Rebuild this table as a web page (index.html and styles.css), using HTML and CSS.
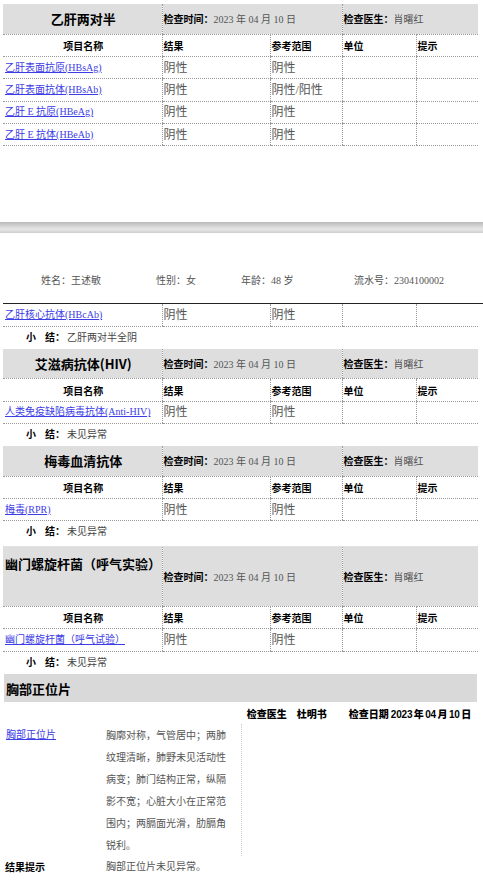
FILE: index.html
```html
<!DOCTYPE html>
<html lang="zh">
<head>
<meta charset="utf-8">
<title>体检报告</title>
<link rel="stylesheet" href="styles.css">
</head>
<body>
<div class="page page-first">
  <table class="rep">
    <colgroup><col class="c1"><col class="c2"><col class="c3"><col class="c4"><col class="c5"></colgroup>
    <tr class="head">
      <td class="title">乙肝两对半</td>
      <td colspan="2"><b class="lbl">检查时间：</b>2023 年 04 月 10 日</td>
      <td colspan="2"><b class="lbl">检查医生：</b>肖曙红</td>
    </tr>
    <tr class="cols">
      <td class="ctr">项目名称</td><td>结果</td><td>参考范围</td><td>单位</td><td>提示</td>
    </tr>
    <tr class="row"><td><a href="#">乙肝表面抗原(HBsAg)</a></td><td class="val">阴性</td><td class="val">阴性</td><td></td><td></td></tr>
    <tr class="row"><td><a href="#">乙肝表面抗体(HBsAb)</a></td><td class="val">阴性</td><td class="val">阴性/阳性</td><td></td><td></td></tr>
    <tr class="row"><td><a href="#">乙肝 E 抗原(HBeAg)</a></td><td class="val">阴性</td><td class="val">阴性</td><td></td><td></td></tr>
    <tr class="row"><td><a href="#">乙肝 E 抗体(HBeAb)</a></td><td class="val">阴性</td><td class="val">阴性</td><td></td><td></td></tr>
  </table>
</div>

<div class="page-break"></div>

<div class="page">
  <div class="patient">
    <span class="pi pi-name">姓名：王述敏</span>
    <span class="pi pi-sex">性别：女</span>
    <span class="pi pi-age">年龄：48 岁</span>
    <span class="pi">流水号：2304100002</span>
  </div>

  <table class="rep">
    <colgroup><col class="c1"><col class="c2"><col class="c3"><col class="c4"><col class="c5"></colgroup>
    <tr class="row"><td><a href="#">乙肝核心抗体(HBcAb)</a></td><td class="val">阴性</td><td class="val">阴性</td><td></td><td></td></tr>
  </table>
  <div class="summary"><b class="sum-xiao">小</b><b class="sum-jie">结：</b>乙肝两对半全阴</div>

  <table class="rep">
    <colgroup><col class="c1"><col class="c2"><col class="c3"><col class="c4"><col class="c5"></colgroup>
    <tr class="head">
      <td class="title">艾滋病抗体(HIV)</td>
      <td colspan="2"><b class="lbl">检查时间：</b>2023 年 04 月 10 日</td>
      <td colspan="2"><b class="lbl">检查医生：</b>肖曙红</td>
    </tr>
    <tr class="cols">
      <td class="ctr">项目名称</td><td>结果</td><td>参考范围</td><td>单位</td><td>提示</td>
    </tr>
    <tr class="row"><td><a href="#">人类免疫缺陷病毒抗体(Anti-HIV)</a></td><td class="val">阴性</td><td class="val">阴性</td><td></td><td></td></tr>
  </table>
  <div class="summary"><b class="sum-xiao">小</b><b class="sum-jie">结：</b>未见异常</div>

  <table class="rep">
    <colgroup><col class="c1"><col class="c2"><col class="c3"><col class="c4"><col class="c5"></colgroup>
    <tr class="head">
      <td class="title">梅毒血清抗体</td>
      <td colspan="2"><b class="lbl">检查时间：</b>2023 年 04 月 10 日</td>
      <td colspan="2"><b class="lbl">检查医生：</b>肖曙红</td>
    </tr>
    <tr class="cols">
      <td class="ctr">项目名称</td><td>结果</td><td>参考范围</td><td>单位</td><td>提示</td>
    </tr>
    <tr class="row"><td><a href="#">梅毒(RPR)</a></td><td class="val">阴性</td><td class="val">阴性</td><td></td><td></td></tr>
  </table>
  <div class="summary summary-ruled"><b class="sum-xiao">小</b><b class="sum-jie">结：</b>未见异常</div>

  <table class="rep">
    <colgroup><col class="c1"><col class="c2"><col class="c3"><col class="c4"><col class="c5"></colgroup>
    <tr class="head head-tall">
      <td class="title title-top">幽门螺旋杆菌（呼气实验）</td>
      <td colspan="2"><b class="lbl">检查时间：</b>2023 年 04 月 10 日</td>
      <td colspan="2"><b class="lbl">检查医生：</b>肖曙红</td>
    </tr>
    <tr class="cols">
      <td class="ctr">项目名称</td><td>结果</td><td>参考范围</td><td>单位</td><td>提示</td>
    </tr>
    <tr class="row"><td><a href="#">幽门螺旋杆菌（呼气试验）</a></td><td class="val">阴性</td><td class="val">阴性</td><td></td><td></td></tr>
  </table>
  <div class="summary"><b class="sum-xiao">小</b><b class="sum-jie">结：</b>未见异常</div>

  <section class="xray">
    <div class="xray-bar">胸部正位片</div>
    <div class="xray-meta"><b>检查医生</b><b class="gap1">杜明书</b><b class="gap2">检查日期</b><b class="gap3">2023 年 04 月 10 日</b></div>
    <div class="xray-body">
      <div class="xray-name"><a href="#">胸部正位片</a></div>
      <div class="xray-text">胸廓对称，气管居中；两肺纹理清晰，肺野未见活动性病变；肺门结构正常，纵隔影不宽；心脏大小在正常范围内；两膈面光滑，肋膈角锐利。</div>
      <div class="xray-rest"></div>
    </div>
    <div class="xray-result">
      <b class="xray-name res-lbl">结果提示</b>
      <span class="res-text">胸部正位片未见异常。</span>
    </div>
  </section>
</div>
</body>
</html>
```

FILE: styles.css
```css
* { box-sizing: border-box; }

body {
  margin: 0;
  background: #fff;
  color: #4a4a4a;
  font-family: "Liberation Serif", "Noto Sans CJK SC", serif;
  font-size: 10px;
}

.page { padding-left: 3px; }
.page-first { height: 222px; padding-top: 4px; }

.page-break {
  height: 11px;
  background: linear-gradient(#b9b9b9, #d2d2d2 35%, #e6e6e6 65%, #cfcfcf);
}

.rep {
  width: 475px;
  border-collapse: collapse;
  table-layout: fixed;
}
.rep .c1 { width: 159px; }
.rep .c2 { width: 108px; }
.rep .c3 { width: 72px; }
.rep .c4 { width: 74px; }
.rep .c5 { width: 62px; }

.rep td {
  border-bottom: 1px dotted #9a9a9a;
  border-left: 1px dotted #9a9a9a;
  padding: 0 0 0 1px;
  height: 22.4px;
  white-space: nowrap;
  overflow: hidden;
  vertical-align: middle;
  line-height: 14px;
}
.rep td:first-child { border-left: 0; padding-left: 2px; }

.rep .head td {
  background: #dedede;
  height: 30px;
  color: #555;
}
.rep .head-tall td { height: 59px; }

.rep .head .title {
  text-align: center;
  color: #000;
  font: 700 13px/18px "Noto Sans CJK SC", sans-serif;
}
.rep .head .title-top {
  vertical-align: top;
  text-align: left;
  padding-top: 8px;
}

.lbl {
  color: #000;
  font: 700 10px "Noto Sans CJK SC", sans-serif;
}

.rep .cols td {
  color: #000;
  font: 700 10px "Noto Sans CJK SC", sans-serif;
}
.rep .cols .ctr { text-align: center; }

.row a {
  color: #3d3de6;
  text-decoration: underline;
  font-size: 10px;
}
.rep .val {
  font-size: 12px;
  color: #555;
}

.summary {
  height: 22px;
  line-height: 22px;
  padding-left: 23px;
  color: #444;
}
.summary-ruled {
  height: 26px;
  border-bottom: 1px solid #e2e2e2;
  margin-right: 5px;
}
.sum-xiao, .sum-jie {
  color: #000;
  font: 700 10px "Noto Sans CJK SC", sans-serif;
}
.sum-xiao { margin-right: 9px; }
.sum-jie { margin-right: 2px; }

.patient {
  height: 71px;
  padding: 41px 0 0 38px;
  line-height: 14px;
  color: #555;
  border-bottom: 1px solid #222;
  display: flex;
}
.pi-name { width: 115px; }
.pi-sex { width: 85px; }
.pi-age { width: 113px; }

.xray-bar {
  margin-left: 1px;
  width: 473px;
  height: 28px;
  background: #d9d9d9;
  color: #000;
  padding-left: 2px;
  font: 700 13px/29px "Noto Sans CJK SC", sans-serif;
}

.xray-meta {
  height: 22px;
  text-align: right;
  padding-right: 12px;
  color: #000;
  font: 700 10px/25px "Liberation Sans", "Noto Sans CJK SC", sans-serif;
}
.gap1 { margin-left: 10px; }
.gap2 { margin-left: 22px; }
.gap3 { margin-left: 2px; word-spacing: -1px; letter-spacing: -0.2px; }

.xray-body {
  display: flex;
  line-height: 22px;
}
.xray-name {
  width: 103px;
  flex: none;
  padding-left: 3px;
}
.xray-name a { color: #3d3de6; text-decoration: underline; }
.xray-text {
  width: 136px;
  flex: none;
  padding-right: 14px;
  color: #555;
  border-right: 1px dotted #cfcfcf;
  font-family: "Noto Sans CJK SC", sans-serif;
}
.xray-rest { flex: 1; }

.xray-result {
  display: flex;
  line-height: 22px;
}
.res-lbl {
  color: #000;
  padding-left: 2px;
  font: 700 10px/22px "Noto Sans CJK SC", sans-serif;
}
.res-text { color: #555; }
```
